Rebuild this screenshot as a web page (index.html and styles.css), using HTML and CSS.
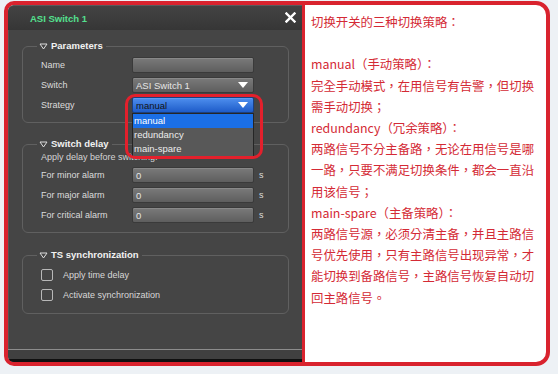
FILE: index.html
```html
<!DOCTYPE html>
<html>
<head>
<meta charset="utf-8">
<link rel="stylesheet" href="styles.css">
</head>
<body>
<div class="frame">
  <div class="dialog">
    <div class="titlebar">
      <span class="title">ASI Switch 1</span>
      <svg class="close" width="11" height="11" viewBox="0 0 11 11"><path d="M1.5 1.5 L9.5 9.5 M9.5 1.5 L1.5 9.5" stroke="#fff" stroke-width="2.4" stroke-linecap="square"/></svg>
    </div>
    <div class="dbody">
      <fieldset class="group g1">
        <legend><svg class="tri" width="9" height="7" viewBox="0 0 9 7"><path d="M1 1 H8 L4.5 6 Z" fill="none" stroke="#ddd" stroke-width="1"/></svg>Parameters</legend>
        <div class="rows">
          <span class="lbl">Name</span><div class="input"></div><span></span>
          <span class="lbl">Switch</span><div class="input select"><span>ASI Switch 1</span><svg class="arrow" width="10" height="6" viewBox="0 0 10 6"><path d="M0 0 H10 L5 6 Z" fill="#fff"/></svg></div><span></span>
          <span class="lbl">Strategy</span>
          <div class="strategy">
            <div class="input select blue"><span>manual</span><svg class="arrow" width="10" height="6" viewBox="0 0 10 6"><path d="M0 0 H10 L5 6 Z" fill="#fff"/></svg></div>
            <div class="dropdown">
              <div class="opt sel">manual</div>
              <div class="opt">redundancy</div>
              <div class="opt">main-spare</div>
            </div>
            <div class="ring"></div>
          </div>
          <span></span>
        </div>
      </fieldset>
      <fieldset class="group g2">
        <legend><svg class="tri" width="9" height="7" viewBox="0 0 9 7"><path d="M1 1 H8 L4.5 6 Z" fill="none" stroke="#ddd" stroke-width="1"/></svg>Switch delay</legend>
        <div class="hint">Apply delay before switching.</div>
        <div class="rows">
          <span class="lbl">For minor alarm</span><div class="input"><span>0</span></div><span class="unit">s</span>
          <span class="lbl">For major alarm</span><div class="input"><span>0</span></div><span class="unit">s</span>
          <span class="lbl">For critical alarm</span><div class="input"><span>0</span></div><span class="unit">s</span>
        </div>
      </fieldset>
      <fieldset class="group g3">
        <legend><svg class="tri" width="9" height="7" viewBox="0 0 9 7"><path d="M1 1 H8 L4.5 6 Z" fill="none" stroke="#ddd" stroke-width="1"/></svg>TS synchronization</legend>
        <div class="checks">
          <div class="check"><span class="box"></span>Apply time delay</div>
          <div class="check"><span class="box"></span>Activate synchronization</div>
        </div>
      </fieldset>
    </div>
    <div class="footer"></div>
  </div>
  <div class="notes">
    切换开关的三种切换策略：<br>
    <br>
    manual（手动策略）：<br>
    完全手动模式，在用信号有告警，但切换<br>
    需手动切换；<br>
    redundancy（冗余策略）：<br>
    两路信号不分主备路，无论在用信号是哪<br>
    一路，只要不满足切换条件，都会一直沿<br>
    用该信号；<br>
    main-spare（主备策略）：<br>
    两路信号源，必须分清主备，并且主路信<br>
    号优先使用，只有主路信号出现异常，才<br>
    能切换到备路信号，主路信号恢复自动切<br>
    回主路信号。
  </div>
</div>
</body>
</html>
```
FILE: styles.css
```css
html, body { margin: 0; padding: 0; }
body {
  background: #edf1f5;
  width: 558px;
  height: 374px;
  overflow: hidden;
}
.frame {
  margin: 1px 0 0 4px;
  width: 538px;
  height: 357px;
  border: 4px solid #d9232e;
  border-radius: 10px 14px 14px 10px;
  display: flex;
  overflow: hidden;
  background: #fff;
}
.dialog {
  width: 294px;
  display: flex;
  flex-direction: column;
  background: #454545;
  border-radius: 6px 0 0 0;
  font-family: "Liberation Sans", Arial, sans-serif;
  font-size: 9px;
  color: #dcdcdc;
}
.titlebar {
  height: 25px;
  flex: none;
  display: flex;
  align-items: center;
  justify-content: space-between;
  padding: 0 6px 0 22px;
  background: linear-gradient(#434343, #363636);
  border-radius: 6px 0 0 0;
  border-top: 1px solid #5a5a5a;
  box-sizing: border-box;
}
.title {
  color: #54e08f;
  font-weight: bold;
  font-size: 9.5px;
}
.close { display: block; margin-top: -1px; }
.dbody {
  flex: 1;
  padding-top: 10px;
  border-left: 1px solid #555;
}
.group {
  margin: 0 13px 0 13px;
  border: 1px solid #606060;
  border-radius: 6px;
  padding: 5px 0 9px 18px;
  min-width: 0;
}
.group legend {
  margin-left: -4px;
  padding: 0 3px 0 2px;
  font-weight: bold;
  font-size: 9.5px;
  line-height: 12px;
  color: #f2f2f2;
  display: flex;
  align-items: center;
}
.tri { margin-right: 3px; }
.g2 { margin-top: 15px; padding-top: 1px; }
.g3 { margin-top: 16px; padding-top: 7px; padding-bottom: 11px; }
.rows {
  display: grid;
  grid-template-columns: 91px 122px 20px;
  grid-auto-rows: 16px;
  row-gap: 4px;
  align-items: center;
}
.lbl { line-height: 16px; }
.hint { line-height: 12px; margin-bottom: 4px; color: #d4d4d4; }
.input {
  height: 16px;
  box-sizing: border-box;
  border: 1px solid #3a3a3a;
  border-radius: 2px;
  background: linear-gradient(#7a7a7a, #5e5e5e);
  box-shadow: inset 0 1px 0 rgba(255,255,255,0.12);
  display: flex;
  align-items: center;
  padding: 0 3px;
  color: #e6e6e6;
  font-size: 9.5px;
}
.select { justify-content: space-between; padding-right: 5px; }
.blue {
  background: linear-gradient(#4e8fee, #1e5cc9);
  border-color: #1a3f80;
  color: #141414;
}
.unit { padding-left: 5px; }
.strategy { position: relative; height: 16px; }
.dropdown {
  position: absolute;
  left: 0;
  top: 16px;
  width: 122px;
  box-sizing: border-box;
  border: 1px solid #262626;
  background: #585858;
  z-index: 2;
}
.opt {
  height: 14px;
  line-height: 14px;
  padding-left: 1px;
  color: #ececec;
  font-size: 9.5px;
}
.opt.sel { background: #1b6fe6; color: #fff; }
.ring {
  position: absolute;
  left: -7px;
  right: -9px;
  top: -3px;
  height: 65px;
  border: 3px solid #e3202c;
  border-radius: 10px;
  z-index: 3;
  box-sizing: border-box;
}
.checks { display: flex; flex-direction: column; gap: 6px; }
.check {
  display: flex;
  align-items: center;
  height: 14px;
  color: #d8d8d8;
}
.box {
  width: 10px;
  height: 10px;
  border: 1px solid #b8b8b8;
  border-radius: 2px;
  margin-right: 10px;
}
.footer {
  flex: none;
  height: 9px;
  border-top: 1px solid #8c8c8c;
  border-bottom: 3px solid #101010;
  background: #404040;
}
.notes {
  flex: 1;
  border-left: 3px solid #d9232e;
  padding: 7px 0 0 6px;
  font-family: "Noto Sans CJK TC", "Noto Sans", sans-serif;
  font-size: 12.4px;
  line-height: 21.2px;
  color: #d42a35;
  white-space: nowrap;
}
```
